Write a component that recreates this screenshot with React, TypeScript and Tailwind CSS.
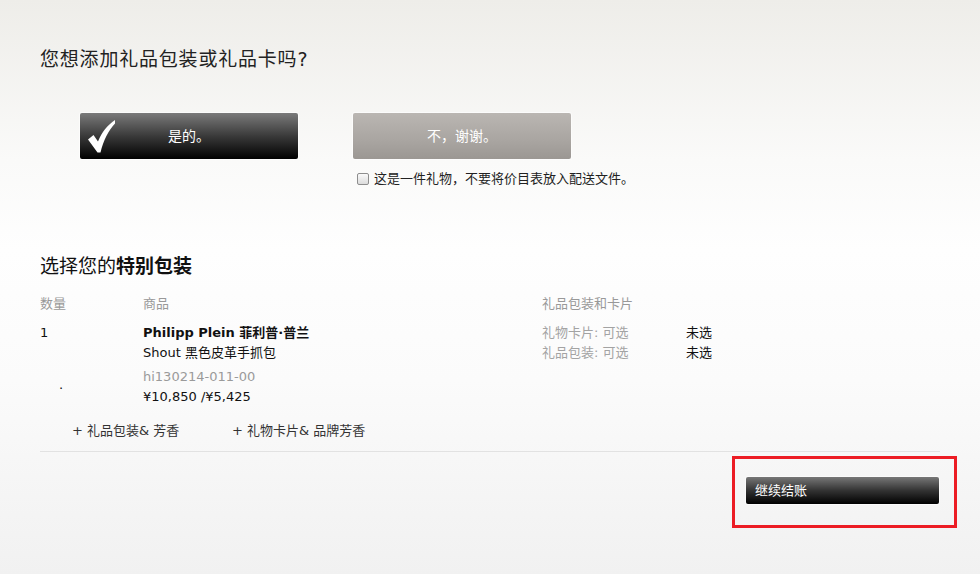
import React from "react";

const font = "font-['DejaVu_Sans','Noto_Sans_CJK_SC',sans-serif]";

function Check() {
  return (
    <svg width="28" height="33" viewBox="0 0 28 33" className="absolute left-[8px] top-[7px]">
      <path
        d="M0 19.5 L5.5 15 L10 21.5 C14 12 19.5 5 27 0 L27 3.5 C20.5 10.5 15.5 20 12.5 32.5 L9.5 32.5 Z"
        fill="#ffffff"
      />
    </svg>
  );
}

export default function App() {
  return (
    <div
      className={`${font} relative min-h-[574px] w-full bg-[linear-gradient(180deg,#eeede9_0px,#fafaf9_160px,#fefefe_250px,#fbfbfb_380px,#f1f1f1_574px)] text-[13px] text-[#222] overflow-hidden`}
    >
      <div className="pl-10 pr-10 pt-[47px]">
        <h1 className="text-[19px] leading-6 font-normal text-[#222] tracking-[0.8px]">
          您想添加礼品包装或礼品卡吗?
        </h1>

        <div className="mt-[42px] ml-10 flex gap-[55px]">
          <div className="relative flex h-[46px] w-[218px] items-center justify-center rounded-[2px] bg-[linear-gradient(180deg,#7a7a7a_0%,#3a3a3a_50%,#000_100%)] text-[14px] text-white shadow-[0_0_0_1px_rgba(255,255,255,0.6)]">
            <Check />
            <span className="relative">是的。</span>
          </div>
          <div className="flex flex-col">
            <div className="flex h-[46px] w-[218px] items-center justify-center rounded-[2px] bg-[linear-gradient(180deg,#bab6b2_0%,#a9a5a1_60%,#9b9793_100%)] text-[14px] text-white shadow-[0_0_0_1px_rgba(255,255,255,0.6)]">
              不，谢谢。
            </div>
            <div className="mt-[12px] ml-[4px] flex items-center leading-4">
              <span className="inline-block h-[12px] w-[12px] rounded-[2px] border border-[#8e8e8e] bg-[linear-gradient(180deg,#fafafa,#dcdcdc)]" />
              <span className="ml-[5px] text-[#222]">这是一件礼物，不要将价目表放入配送文件。</span>
            </div>
          </div>
        </div>

        <h2 className="mt-[67px] text-[19px] leading-6 font-normal text-[#111]">
          选择您的<span className="font-bold">特别包装</span>
        </h2>

        <div className="mt-[18px] flex leading-4 text-[#999]">
          <div className="w-[103px]">数量</div>
          <div className="w-[399px]">商品</div>
          <div>礼品包装和卡片</div>
        </div>

        <div className="mt-[11px] flex leading-5">
          <div className="w-[103px] text-[#111]">
            <div>1</div>
            <div className="mt-[34px] pl-[19px] leading-4">.</div>
          </div>
          <div className="w-[399px]">
            <div className="font-bold text-[#111]">Philipp Plein 菲利普·普兰</div>
            <div className="text-[#111]">Shout 黑色皮革手抓包</div>
            <div className="mt-[4px] text-[#9a9a9a]">hi130214-011-00</div>
            <div className="leading-[19px] text-[#111]">¥10,850 /¥5,425</div>
          </div>
          <div>
            <div className="flex">
              <span className="w-[144px] text-[#a3a3a3]">礼物卡片: 可选</span>
              <span className="text-[#111]">未选</span>
            </div>
            <div className="flex">
              <span className="w-[144px] text-[#a3a3a3]">礼品包装: 可选</span>
              <span className="text-[#111]">未选</span>
            </div>
          </div>
        </div>

        <div className="mt-[15px] flex leading-5 text-[#333]">
          <span className="ml-[32px] w-[160px]">+ 礼品包装&amp; 芳香</span>
          <span>+ 礼物卡片&amp; 品牌芳香</span>
        </div>

        <div className="mt-[10px] h-px w-[900px] bg-[#e2e2e2]" />

        <div className="mt-[4px] mr-[-17px] flex justify-end">
          <div className="h-[72px] w-[225px] border-[3px] border-[#ec1c24] pl-[11px] pt-[18px]">
            <div className="flex h-[27px] w-[193px] items-center rounded-[2px] bg-[linear-gradient(180deg,#777_0%,#333_50%,#000_100%)] pl-[9px] text-[13px] text-white shadow-[0_0_0_1px_rgba(255,255,255,0.6)]">
              继续结账
            </div>
          </div>
        </div>
      </div>
    </div>
  );
}
